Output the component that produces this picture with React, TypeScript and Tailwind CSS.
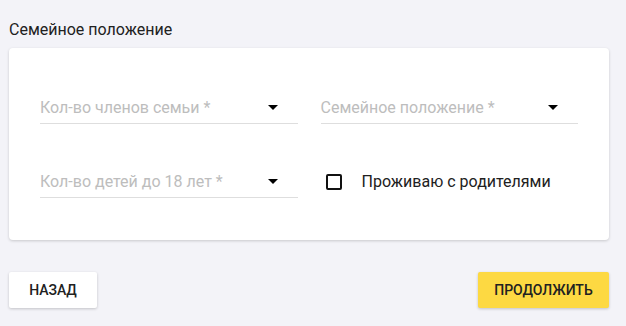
import React from "react";

function Arrow() {
  return (
    <svg width="10" height="5" viewBox="0 0 10 5" className="shrink-0">
      <path d="M0 0 L5 5 L10 0 Z" fill="#000" />
    </svg>
  );
}

function SelectField({ label }: { label: string }) {
  return (
    <div className="flex h-[32px] items-center justify-between border-b border-[#dedede] pr-[20px]">
      <span className="text-[16px] leading-[20px] text-[#bdbdbd]">{label}</span>
      <Arrow />
    </div>
  );
}

export default function App() {
  return (
    <div
      className="min-h-[326px] w-[626px] bg-[#f3f3f8] pl-[9px] pr-[17px] pt-[20px]"
      style={{ fontFamily: "Roboto, 'Noto Sans', sans-serif" }}
    >
      <div className="mb-[8px] text-[16px] leading-[20px] text-[#212121]">Семейное положение</div>
      <div className="grid grid-cols-2 gap-x-[23px] gap-y-[42px] rounded-[4px] bg-white px-[31px] pb-[42px] pt-[44px] shadow-[0_1px_3px_rgba(0,0,0,0.18)]">
        <SelectField label="Кол-во членов семьи *" />
        <SelectField label="Семейное положение *" />
        <SelectField label="Кол-во детей до 18 лет *" />
        <div className="flex h-[32px] items-center pl-[5px]">
          <div className="h-[16px] w-[16px] rounded-[2px] border-2 border-[#111]" />
          <span className="ml-[20px] text-[16px] leading-[20px] text-[#212121]">Проживаю с родителями</span>
        </div>
      </div>
      <div className="mt-[32px] flex justify-between">
        <button className="h-[36px] w-[88px] rounded-[2px] bg-white text-[14px] font-medium uppercase text-[#212121] shadow-[0_1px_3px_rgba(0,0,0,0.2)]">
          Назад
        </button>
        <button className="h-[36px] w-[131px] rounded-[2px] bg-[#fdd942] text-[14px] font-medium uppercase text-[#212121] shadow-[0_1px_3px_rgba(0,0,0,0.2)]">
          Продолжить
        </button>
      </div>
    </div>
  );
}
